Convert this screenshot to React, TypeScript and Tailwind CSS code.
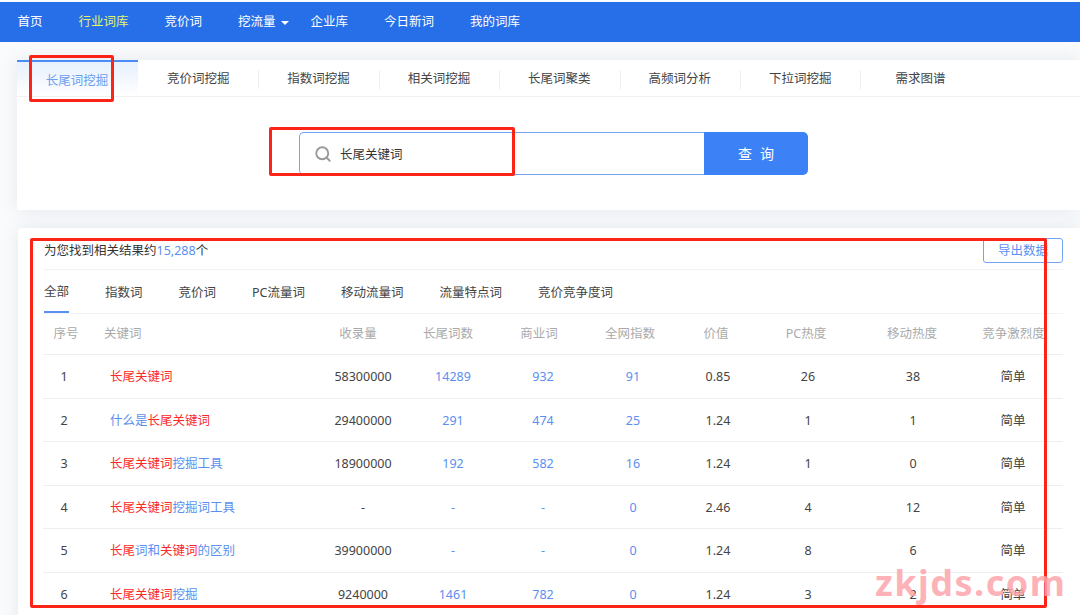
import { Search } from "lucide-react";

const navItems = ["首页", "行业词库", "竞价词", "挖流量", "企业库", "今日新词", "我的词库"];
const toolTabs = ["竞价词挖掘", "指数词挖掘", "相关词挖掘", "长尾词聚类", "高频词分析", "下拉词挖掘", "需求图谱"];
const filters = ["全部", "指数词", "竞价词", "PC流量词", "移动流量词", "流量特点词", "竞价竞争度词"];
const headers = ["收录量", "长尾词数", "商业词", "全网指数", "价值", "PC热度", "移动热度", "竞争激烈度"];

// red = 命中关键词，其余部分为蓝色
type Seg = { t: string; red?: boolean };

const rows: { id: number; kw: Seg[]; vals: string[]; h: string }[] = [
  { id: 1, kw: [{ t: "长尾关键词", red: true }], vals: ["58300000", "14289", "932", "91", "0.85", "26", "38"], h: "h-[44px]" },
  { id: 2, kw: [{ t: "什么是" }, { t: "长尾关键词", red: true }], vals: ["29400000", "291", "474", "25", "1.24", "1", "1"], h: "h-[43px]" },
  { id: 3, kw: [{ t: "长尾关键词", red: true }, { t: "挖掘工具" }], vals: ["18900000", "192", "582", "16", "1.24", "1", "0"], h: "h-[44px]" },
  { id: 4, kw: [{ t: "长尾关键词", red: true }, { t: "挖掘词工具" }], vals: ["-", "-", "-", "0", "2.46", "4", "12"], h: "h-[43px]" },
  { id: 5, kw: [{ t: "长尾", red: true }, { t: "词和" }, { t: "关键词", red: true }, { t: "的区别" }], vals: ["39900000", "-", "-", "0", "1.24", "8", "6"], h: "h-[44px]" },
  { id: 6, kw: [{ t: "长尾关键词", red: true }, { t: "挖掘" }], vals: ["9240000", "1461", "782", "0", "1.24", "3", "2"], h: "h-[43px]" },
];

export default function App() {
  return (
    <div className="relative h-[615px] w-[1080px] overflow-hidden bg-[#fafbfc] font-['Noto_Sans','Noto_Sans_CJK_SC',sans-serif] text-[12.5px] text-[#444]">
      {/* top nav */}
      <div className="mt-[2px] flex h-[40px] items-center gap-[36px] bg-[#276fe8] pl-[17.5px] text-white">
        {navItems.map((item) => (
          <div
            key={item}
            className={`flex items-center ${item === "行业词库" ? "text-[#e2f56b]" : ""} ${item === "挖流量" ? "-mr-[14px]" : ""}`}
          >
            {item}
            {item === "挖流量" && (
              <span className="ml-[5px] mt-[1px] h-0 w-0 border-x-[4px] border-t-[4px] border-x-transparent border-t-white" />
            )}
          </div>
        ))}
      </div>

      {/* search card */}
      <div className="ml-[17px] mt-[18px] h-[150px] bg-white shadow-[0_0_18px_rgba(110,135,170,0.16)]">
        <div className="flex h-[37px] border-b border-[#f1f1f1]">
          <div className="flex w-[121px] items-center justify-center border-t-2 border-[#4a8df5] bg-gradient-to-b from-[#e7f0fc] to-white pr-[1px] pt-[5px] text-[#6a9ff0]">
            长尾词挖掘
          </div>
          {toolTabs.map((tab, i) => (
            <div key={tab} className="relative flex w-[120.4px] items-center justify-center pt-[2px]">
              {i > 0 && <span className="absolute left-0 top-[10px] h-[19px] w-px bg-[#eeeeee]" />}
              {tab}
            </div>
          ))}
        </div>
        <div className="ml-[282px] mt-[35px] flex h-[43px] w-[509px]">
          <div className="flex w-[405px] items-center rounded-l-[5px] border border-r-0 border-[#74a3f5] pl-[14px] text-[#333]">
            <Search size={18} className="text-[#999]" strokeWidth={2.5} />
            <span className="ml-[8px] mt-[3px]">长尾关键词</span>
          </div>
          <div className="flex flex-1 items-center justify-center gap-[8px] rounded-r-[5px] bg-[#3d81f7] text-[14px] text-white">
            <span>查</span>
            <span>询</span>
          </div>
        </div>
      </div>

      {/* results card */}
      <div className="ml-[18px] mt-[18px] h-[400px] rounded-tl-[3px] bg-white pl-[25px] pr-[17px] pt-[10px] shadow-[0_0_18px_rgba(110,135,170,0.16)]">
        <div className="flex h-[32px] items-start justify-between border-b border-[#f3f3f3]">
          <div className="pl-[1px] pt-[4px] text-[#333]">
            为您找到相关结果约<span className="text-[#5b8ff0]">15,288</span>个
          </div>
          <div className="flex h-[25px] w-[80px] items-center justify-center rounded-[3px] border border-[#74a3f5] pt-[1px] text-[#5b8ff0]">
            导出数据
          </div>
        </div>
        <div className="flex h-[44px] gap-[36px] border-b border-[#f3f3f3] pl-[1px]">
          {filters.map((f, i) => (
            <div
              key={f}
              className={`flex items-center pt-[4px] ${i === 0 ? "border-b-2 border-[#5b8ff0]" : ""}`}
            >
              {f}
            </div>
          ))}
        </div>

        {/* table head */}
        <div className="grid h-[41px] grid-cols-[46px_229px_80px_100px_82px_100px_72px_108px_104px_99px] items-center border-b border-[#eeeeee] text-center text-[#aaaaaa]">
          <div>序号</div>
          <div className="pl-[15px] text-left">关键词</div>
          {headers.map((h) => (
            <div key={h} className="whitespace-nowrap">
              {h}
            </div>
          ))}
        </div>

        {/* table rows */}
        {rows.map((row) => (
          <div
            key={row.id}
            className={`grid grid-cols-[42px_238px_80px_100px_80px_100px_70px_110px_100px_100px] items-center border-b border-[#eeeeee] pt-[2px] text-center ${row.h}`}
          >
            <div>{row.id}</div>
            <div className="pl-[25px] text-left text-[#5b8ff0]">
              {row.kw.map((s, i) => (
                <span key={i} className={s.red ? "text-[#fa2a2a]" : ""}>
                  {s.t}
                </span>
              ))}
            </div>
            {row.vals.map((v, i) => (
              <div key={i} className={i >= 1 && i <= 3 ? "text-[#5b8ff0]" : ""}>
                {v}
              </div>
            ))}
            <div>简单</div>
          </div>
        ))}
      </div>

      {/* red annotation boxes over the page */}
      <div className="absolute left-[29px] top-[55px] h-[47px] w-[85px] rounded-[2px] border-[3px] border-[#fb2517]" />
      <div className="absolute left-[269px] top-[127px] h-[49px] w-[246px] rounded-[2px] border-[3px] border-[#fb2517]" />
      <div className="absolute left-[30px] top-[238px] h-[370px] w-[1017px] rounded-[2px] border-[3px] border-[#fb2517]" />

      {/* watermark */}
      <div className="absolute left-[875px] top-[558px] text-[36px] font-bold leading-[50px] tracking-[1.5px] text-[#fda4ab]/85">
        zkjds.com
      </div>
    </div>
  );
}
